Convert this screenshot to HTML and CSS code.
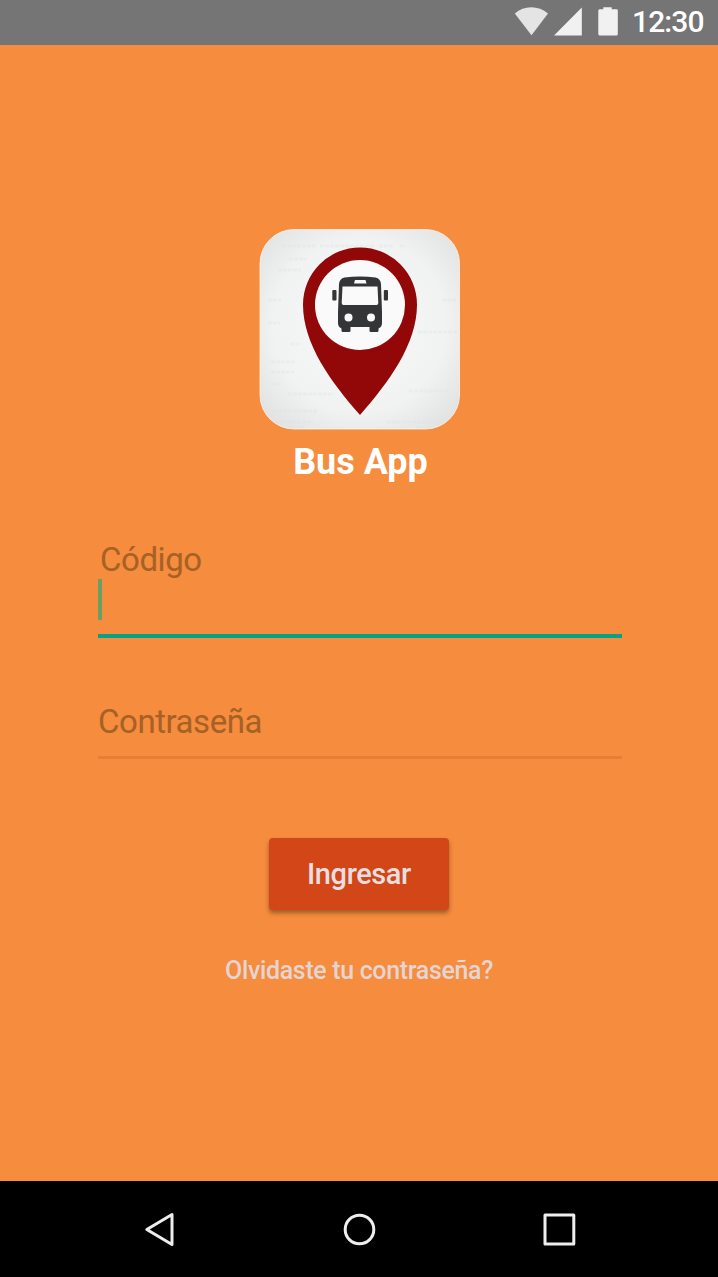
FILE: index.html
```html
<!DOCTYPE html>
<html lang="es">
<head>
<meta charset="utf-8">
<title>Bus App</title>
<link rel="stylesheet" href="styles.css">
</head>
<body>
<header class="status-bar">
  <svg class="status-icons" width="108" height="45" viewBox="0 0 108 45">
    <path class="wifi" d="M0.800 13.500Q8 7.200 17.300 7.200T34 13.500L17.500 35.200Z"/>
    <path class="signal" d="M40 35.500L67.800 7.500V35.500Z"/>
    <path class="battery" d="M84.500 9.300H89.300V7.200H97.700V9.300H102.500Q103.800 9.300 103.800 10.700V34Q103.800 35.500 102.300 35.500H86Q84.300 35.500 84.300 34V10.700Q84.300 9.300 86 9.300Z"/>
  </svg>
  <time class="clock">12:30</time>
</header>
<main class="login">
  <svg class="logo" width="202" height="202" viewBox="0 0 202 202">
    <defs>
      <radialGradient id="paper" cx="50%" cy="48%" r="72%">
        <stop offset="0" stop-color="#f8f8f8"/>
        <stop offset=".6" stop-color="#f1f2f2"/>
        <stop offset="1" stop-color="#dcdede"/>
      </radialGradient>
    </defs>
    <rect x="1" y=".5" width="199.500" height="199.500" rx="34" fill="url(#paper)" stroke="#fff3e8" stroke-width=".8"/>
    <path class="map-marks" d="M23 17H57M61 17H115M120 17H134M141 17H147M30 30H47M19 41H42M9 71H22M9 94H21M31 115H41M12 133H37M12 143H35M12 155H23M29 165H75M14 182H58M18 193H54M128 193H185M150 162H190M159 103H198M183 71H198"/>
    <path class="pin" d="M101 186C72 153 44 115 44 75.500A57 57 0 0 1 158 75.500C158 115 130 153 101 186Z"/>
    <circle cx="101" cy="76" r="45" fill="#fafafa"/>
    <g class="bus">
      <path d="M85.500 48.500Q101 46.500 116.500 48.500Q121.500 49.500 122 55L123 83V94Q123 98 119.500 99.500V102Q119.500 103 118 103H112Q110.500 103 110.500 102V98H91.500V102Q91.500 103 90 103H84Q82.500 103 82.500 102V99.500Q79 98 79 94V83L80 55Q80.500 49.500 85.500 48.500Z"/>
      <rect x="73.300" y="61" width="4.200" height="10.500" rx="1"/>
      <rect x="124.800" y="61" width="4.200" height="10.500" rx="1"/>
      <path class="glass" d="M83.500 57.500H118.500L119.300 74Q119.300 76 117.500 76H84.500Q82.700 76 82.700 74ZM96 51H106.500L107.500 54.500H95Z"/>
      <circle class="glass" cx="89.500" cy="88.500" r="4"/>
      <circle class="glass" cx="112" cy="88.500" r="4"/>
    </g>
  </svg>
  <h1 class="title">Bus App</h1>
  <form class="fields">
    <label class="code-label">Código</label>
    <div class="code-input"><span class="caret"></span></div>
    <label class="password-label">Contraseña</label>
  </form>
  <button class="submit" type="button">Ingresar</button>
  <a class="forgot">Olvidaste tu contraseña?</a>
</main>
<nav class="nav-bar">
  <svg width="40" height="40" viewBox="0 0 40 40"><path d="M6.800 20.500L32 5.500V35.500Z"/></svg>
  <svg width="40" height="40" viewBox="0 0 40 40"><circle cx="19.500" cy="20.500" r="14.300"/></svg>
  <svg width="40" height="40" viewBox="0 0 40 40"><rect x="5" y="6" width="28.800" height="29"/></svg>
</nav>
</body>
</html>
```
FILE: styles.css
```css
* { box-sizing: border-box; }
body {
  margin: 0;
  height: 1277px;
  display: flex;
  flex-direction: column;
  overflow: hidden;
  background: #f58c3e;
  font-family: Roboto, "Liberation Sans", sans-serif;
}
.status-bar {
  height: 45px;
  display: flex;
  justify-content: flex-end;
  padding-right: 14px;
  background: #757575;
}
.status-icons { margin-right: 10px; }
.wifi { fill: #e4e4e4; }
.signal, .battery { fill: #f1f1f1; }
.clock {
  width: 72px;
  color: #fff;
  font-size: 30px;
  font-weight: 500;
  letter-spacing: -.9px;
  line-height: 43px;
  white-space: nowrap;
}
.login {
  flex: 1;
  display: flex;
  flex-direction: column;
  align-items: center;
  padding-top: 184px;
}
.logo { display: block; flex: none; margin-left: 2px; }
.map-marks { fill: none; stroke: #dfe1e1; stroke-width: 3; stroke-dasharray: 4 1; opacity: .3; }
.pin { fill: #920808; }
.bus { fill: #343536; }
.glass { fill: #fafafa; }
.title {
  margin: 10px 0 0 3px;
  color: #fff;
  font-size: 36px;
  font-weight: 700;
  line-height: 42px;
}
.fields {
  width: 524px;
  margin-left: 2px;
  display: flex;
  flex-direction: column;
  color: #a66125;
  font-size: 33px;
  letter-spacing: -.45px;
  line-height: 38px;
}
.code-label { margin-top: 58px; padding-left: 2px; }
.code-input { height: 59px; border-bottom: 4px solid #08a086; }
.caret {
  display: block;
  width: 4px;
  height: 41px;
  background: #699f64;
}
.password-label {
  height: 56px;
  margin-top: 65px;
  border-bottom: 3px solid #e57f35;
}
.submit {
  width: 180px;
  height: 72px;
  margin-top: 79px;
  padding: 0;
  border: 0;
  border-radius: 4px;
  background: #d34617;
  box-shadow: 0 3px 4px rgba(100, 60, 20, .6);
  color: #e6dfe0;
  font: 500 29px/72px Roboto, sans-serif;
  letter-spacing: -.4px;
}
.forgot {
  margin-top: 46px;
  color: #e4d4d2;
  font-size: 25px;
  font-weight: 500;
  letter-spacing: -.35px;
  line-height: 30px;
  white-space: nowrap;
}
.nav-bar {
  height: 96px;
  display: flex;
  gap: 160px;
  padding: 28px 0 0 140px;
  background: #000;
}
.nav-bar svg { fill: none; stroke: #eee; stroke-width: 3; stroke-linejoin: round; }
```
